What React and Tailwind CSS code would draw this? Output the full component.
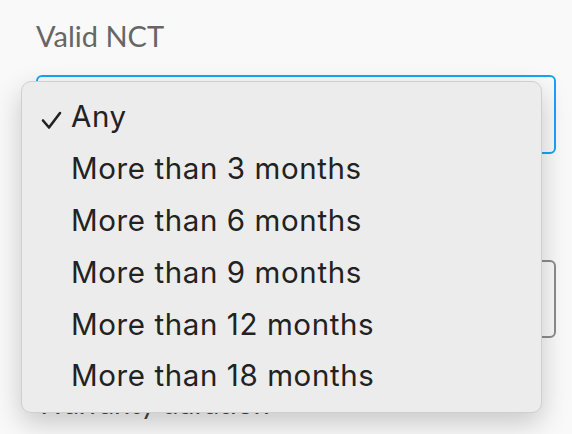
import React from "react";

const items = [
  "Any",
  "More than 3 months",
  "More than 6 months",
  "More than 9 months",
  "More than 12 months",
  "More than 18 months",
];

export default function App() {
  return (
    <div className="relative w-[572px] h-[434px] overflow-hidden bg-[#f9f9f9]">
      <div className="flex flex-col pl-[36px] pr-[16px] pt-[19px]">
        <div className="text-[29px] leading-[34px] text-[#666666] font-['Lato',sans-serif]">Valid NCT</div>
        <div className="mt-[22px] h-[79px] rounded-[6px] border-2 border-[#16a4f5] bg-[#f9f9f9]"></div>
        <div className="mt-[50px] h-[34px]"></div>
        <div className="mt-[22px] h-[78px] rounded-[6px] border-2 border-[#8c8c8c] bg-[#f9f9f9]"></div>
        <div className="mt-[48px] text-[29px] leading-[34px] text-[#444444] font-['Lato',sans-serif]">Warranty duration</div>
      </div>

      <div className="absolute left-[21px] top-[81px] w-[521px] h-[332px] rounded-[10px] border border-[#cfcfcf] bg-[#ececec] shadow-[0_10px_28px_rgba(0,0,0,0.2)] pt-[8.5px] font-['Inter',sans-serif] text-[#222222]">
        {items.map((t, i) => (
          <div key={t} className="relative flex items-center h-[51.8px] pl-[49px] text-[29.5px] leading-[52px] tracking-[0.6px]">
            {i === 0 && (
              <svg className="absolute left-[19px] top-[20px]" width="21" height="19" viewBox="0 0 21 19">
                <path d="M2 9.5 L8 16.5 L19 2" fill="none" stroke="#222" strokeWidth="2.6" strokeLinecap="round" strokeLinejoin="round" />
              </svg>
            )}
            <span>{t}</span>
          </div>
        ))}
      </div>
    </div>
  );
}
